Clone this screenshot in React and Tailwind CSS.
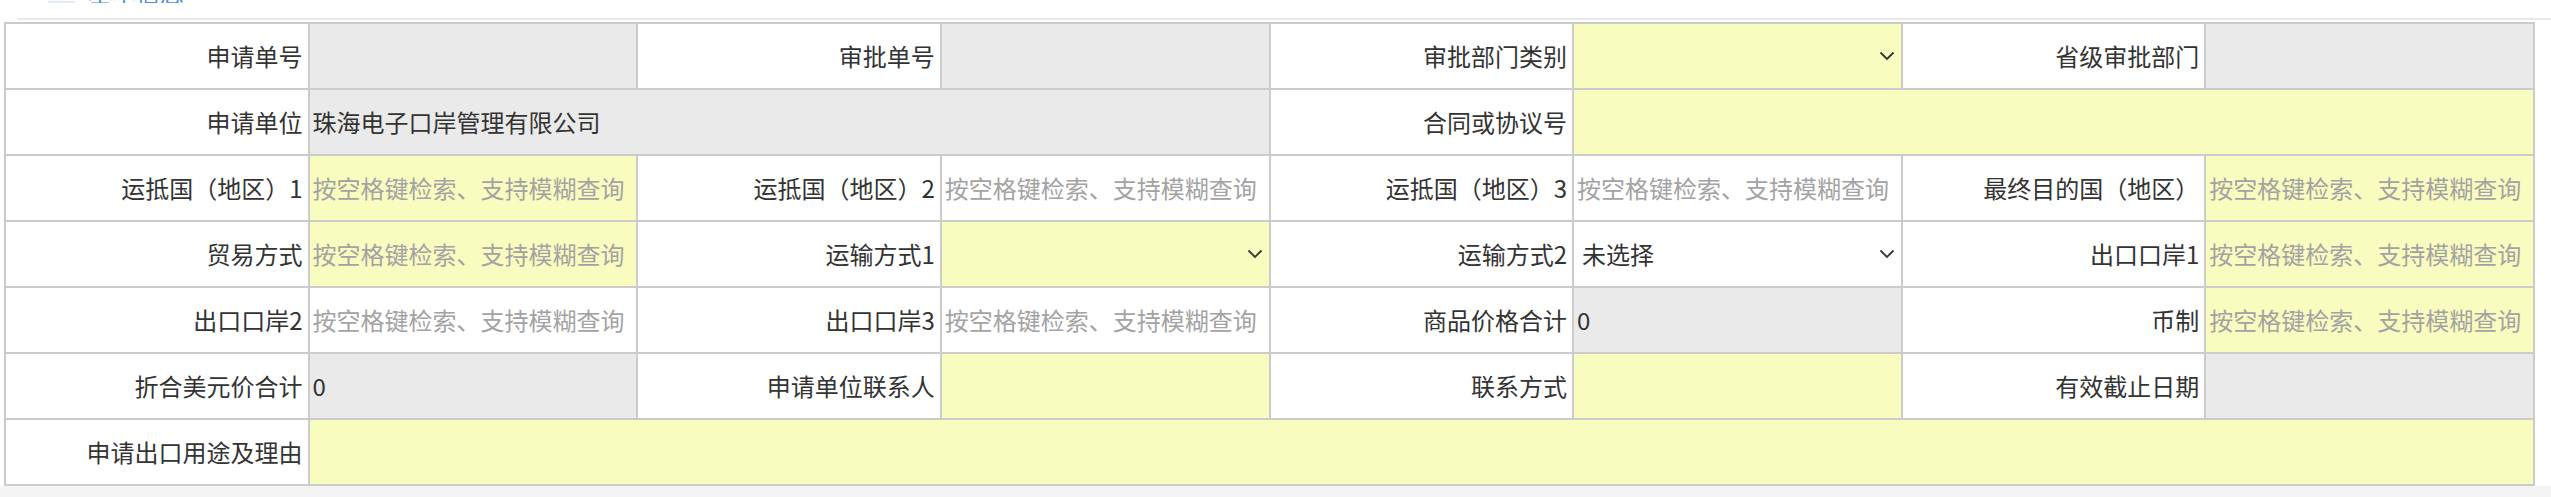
import React from "react";

const PH = "按空格键检索、支持模糊查询";

function Chevron() {
  return (
    <svg width="16" height="10" viewBox="0 0 16 10" className="shrink-0">
      <path d="M1.5 1.5 L8 8 L14.5 1.5" fill="none" stroke="#333" strokeWidth="1.8" />
    </svg>
  );
}

function Label({ children }) {
  return (
    <div className="bg-white flex items-center justify-end pr-[5px] text-[#333] whitespace-nowrap overflow-hidden">
      {children}
    </div>
  );
}

function Value({ bg = "bg-white", span = "", children, placeholder }) {
  return (
    <div className={`${bg} ${span} flex items-center pl-[3px] whitespace-nowrap overflow-hidden`}>
      {placeholder ? (
        <span className="text-[#a3a3a3]">{placeholder}</span>
      ) : (
        <span className="text-[#333]">{children}</span>
      )}
    </div>
  );
}

function Select({ bg = "bg-white", children }) {
  return (
    <div className={`${bg} flex items-center justify-between pl-[8px] pr-[6px] whitespace-nowrap overflow-hidden`}>
      <span className="text-[#333]">{children}</span>
      <Chevron />
    </div>
  );
}

const Y = "bg-[#f9fcbf]";
const G = "bg-[#eaeaea]";

export default function App() {
  return (
    <div className="w-[2551px] h-[497px] bg-[#f4f4f4] font-['Noto_Sans_CJK_SC',sans-serif] text-[24px] leading-none overflow-hidden">
      <div className="bg-white">
        <div className="h-[3px] overflow-hidden flex items-end">
          <span className="ml-[48px] w-[27px] h-[2px] bg-[#e3eafb]" />
          <span className="ml-[13px] text-[#4a90e2] text-[24px] leading-[22px] h-[22px]">基本信息</span>
        </div>
        <div className="h-[15px]" />
        <div className="ml-[17px] h-[2px] bg-[#e9e9e9]" />
        <div className="h-[2px]" />
        <div className="ml-[4px] w-[2531px] grid grid-cols-[12fr_13fr_12fr_13fr_12fr_13fr_12fr_13fr] auto-rows-[64px] gap-[2px] p-[2px] bg-[#cbcbcb]">
          {/* Row 1 */}
          <Label>申请单号</Label>
          <Value bg={G} />
          <Label>审批单号</Label>
          <Value bg={G} />
          <Label>审批部门类别</Label>
          <Select bg={Y} />
          <Label>省级审批部门</Label>
          <Value bg={G} />

          {/* Row 2 */}
          <Label>申请单位</Label>
          <Value bg={G} span="col-span-3">珠海电子口岸管理有限公司</Value>
          <Label>合同或协议号</Label>
          <Value bg={Y} span="col-span-3" />

          {/* Row 3 */}
          <Label>运抵国（地区）1</Label>
          <Value bg={Y} placeholder={PH} />
          <Label>运抵国（地区）2</Label>
          <Value placeholder={PH} />
          <Label>运抵国（地区）3</Label>
          <Value placeholder={PH} />
          <Label>最终目的国（地区）</Label>
          <Value bg={Y} placeholder={PH} />

          {/* Row 4 */}
          <Label>贸易方式</Label>
          <Value bg={Y} placeholder={PH} />
          <Label>运输方式1</Label>
          <Select bg={Y} />
          <Label>运输方式2</Label>
          <Select>未选择</Select>
          <Label>出口口岸1</Label>
          <Value bg={Y} placeholder={PH} />

          {/* Row 5 */}
          <Label>出口口岸2</Label>
          <Value placeholder={PH} />
          <Label>出口口岸3</Label>
          <Value placeholder={PH} />
          <Label>商品价格合计</Label>
          <Value bg={G}>0</Value>
          <Label>币制</Label>
          <Value bg={Y} placeholder={PH} />

          {/* Row 6 */}
          <Label>折合美元价合计</Label>
          <Value bg={G}>0</Value>
          <Label>申请单位联系人</Label>
          <Value bg={Y} />
          <Label>联系方式</Label>
          <Value bg={Y} />
          <Label>有效截止日期</Label>
          <Value bg={G} />

          {/* Row 7 */}
          <Label>申请出口用途及理由</Label>
          <Value bg={Y} span="col-span-7" />
        </div>
      </div>
    </div>
  );
}
